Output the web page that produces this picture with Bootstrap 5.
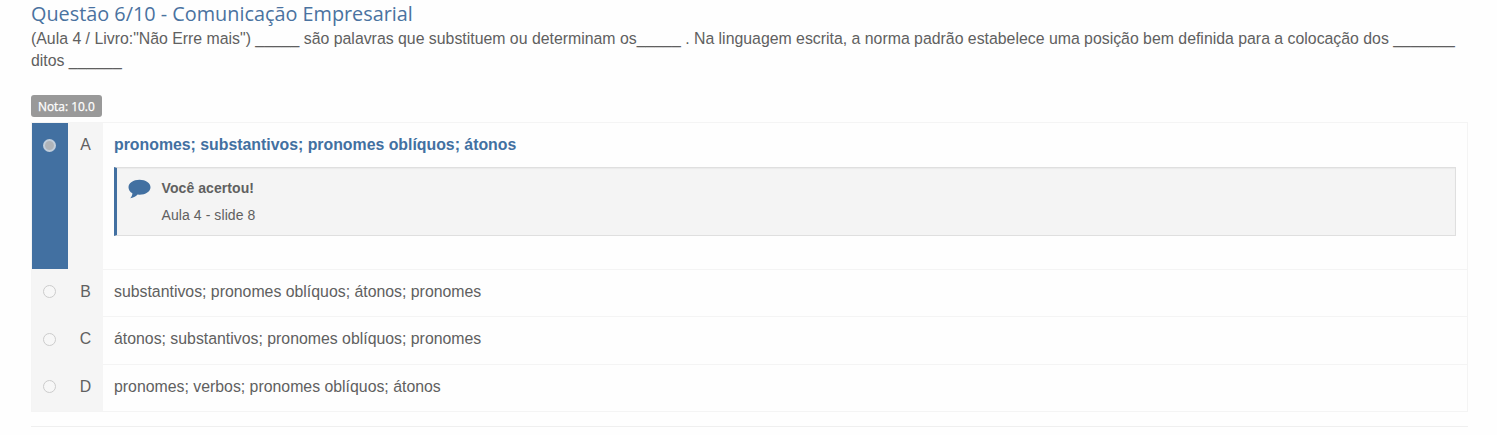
<!DOCTYPE html>
<html lang="pt-BR">
<head>
<meta charset="utf-8">
<title>Comunicação Empresarial</title>
<link rel="stylesheet" href="https://cdn.jsdelivr.net/npm/bootstrap@5.3.0/dist/css/bootstrap.min.css">
<style>
body{font-family:"Liberation Sans",Arial,sans-serif;font-size:15.85px;line-height:22px;color:#606060;background:#fefefe;overflow:hidden}
.quiz{padding:0 29px 0 31px}
.quiz h1{font-family:"Open Sans",sans-serif;font-size:19.83px;line-height:28px;color:#4a72a0;font-weight:400}
.grade{font-family:"Open Sans",sans-serif;font-size:11.9px;line-height:22px;font-weight:400;-webkit-text-stroke:.25px #fff;background:#999;padding:0 7px;border-radius:3px;color:#fff;width:71px;margin-top:23px;margin-bottom:5px}
.options{border:1px solid #f4f4f4}
.option{height:47px}
.option.first{height:146px}
.option.tall{height:48px}
.pick{width:36px;background:#f5f5f5;padding:16px 12px 0 11px}
.first .pick{background:#4270a1}
.option.tall .pick{padding-top:17px}
.letter{width:35px;background:#f5f5f5;padding-top:11px}
.option:not(.first) .letter{padding-top:12px}
.answer{padding:11px 11px 0}
.option:not(.first) .answer{border-top:1px solid #f4f4f4}
.right{color:#4270a1}
.dot{width:13px;height:13px;border:1px solid #ccc;border-radius:50%;background:#f7f7f7}
.first .dot{border:2px solid #c2cedb;background:#b0b4b9}
.feedback{margin-top:11px;height:69px;background:#f4f4f4;border:1px solid #dfdfdf;border-left:3px solid #4270a1;box-shadow:inset 0 1px 1px rgba(0,0,0,.04);font-size:14px;letter-spacing:.08px;padding:9px 11px}
.feedback svg{width:23px;height:20px;margin:2px 10.500px 0 0}
.tip{margin-top:5px}
.divider{height:1px;background:#efefef;margin-top:14px}
</style>
<script src="https://cdn.jsdelivr.net/npm/bootstrap@5.3.0/dist/js/bootstrap.bundle.min.js"></script>
</head>
<body>
<main class="quiz">
  <h1 class="m-0">Questão 6/10 - Comunicação Empresarial</h1>
  <p class="m-0">(Aula 4 / Livro:"Não Erre mais") _____ são palavras que substituem ou determinam os_____ . Na linguagem escrita, a norma padrão estabelece uma posição bem definida para a colocação dos _______ ditos ______</p>
  <div class="grade text-nowrap">Nota: 10.0</div>
  <div class="options">
    <div class="option first d-flex">
      <div class="pick"><div class="dot"></div></div>
      <div class="letter text-center">A</div>
      <div class="answer flex-grow-1">
        <b class="right d-block">pronomes; substantivos; pronomes oblíquos; átonos</b>
        <div class="feedback d-flex">
          <svg viewBox="0 0 23 20" fill="#4270a1"><path d="M11.500 .7C17.700 .7 22.500 4 22.500 8.200S17.700 15.700 11.500 15.700L9.600 15.600C7.600 17.900 5 19 2.200 19.300C3.500 18 4.300 16.500 4.400 14.300C2 12.900 .5 10.700 .5 8.200C.5 4 5.300 .7 11.500 .7Z"/></svg>
          <div><b class="d-block">Você acertou!</b><div class="tip">Aula 4 - slide 8</div></div>
        </div>
      </div>
    </div>
    <div class="option d-flex">
      <div class="pick"><div class="dot"></div></div>
      <div class="letter text-center">B</div>
      <div class="answer flex-grow-1">substantivos; pronomes oblíquos; átonos; pronomes</div>
    </div>
    <div class="option tall d-flex">
      <div class="pick"><div class="dot"></div></div>
      <div class="letter text-center">C</div>
      <div class="answer flex-grow-1">átonos; substantivos; pronomes oblíquos; pronomes</div>
    </div>
    <div class="option d-flex">
      <div class="pick"><div class="dot"></div></div>
      <div class="letter text-center">D</div>
      <div class="answer flex-grow-1">pronomes; verbos; pronomes oblíquos; átonos</div>
    </div>
  </div>
  <div class="divider"></div>
</main>
</body>
</html>
